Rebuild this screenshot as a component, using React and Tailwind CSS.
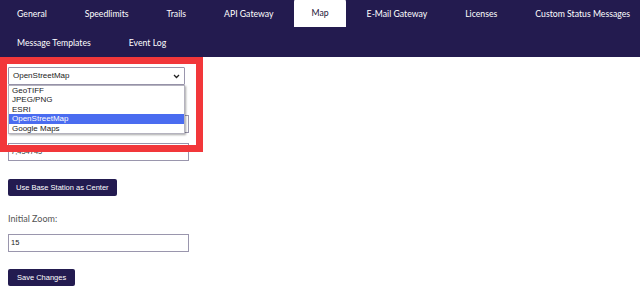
const TABS_ROW1 = [
  "General",
  "Speedlimits",
  "Trails",
  "API Gateway",
  "Map",
  "E-Mail Gateway",
  "Licenses",
  "Custom Status Messages",
];
const TABS_ROW2 = ["Message Templates", "Event Log"];

const MAP_TYPES = ["GeoTIFF", "JPEG/PNG", "ESRI", "OpenStreetMap", "Google Maps"];

function Tab({ label, active }) {
  return (
    <div
      className={`h-[28px] px-[17px] flex items-center whitespace-nowrap text-[8.7px] rounded-t-[3px] ${
        active ? "bg-white text-[#1b1535] -mt-px" : "text-white"
      }`}
    >
      {label}
    </div>
  );
}

export default function App() {
  return (
    <div className="w-[640px] h-[304px] bg-white overflow-hidden relative font-['Lato',sans-serif]">
      <nav className="bg-[#231b4f] h-[57px] flex flex-col">
        <div className="flex gap-[4px] h-[29px]">
          {TABS_ROW1.map((t) => (
            <Tab key={t} label={t} active={t === "Map"} />
          ))}
        </div>
        <div className="flex gap-[4px] h-[28px]">
          {TABS_ROW2.map((t) => (
            <Tab key={t} label={t} />
          ))}
        </div>
      </nav>

      <main className="px-[8px] pt-[10px] font-['Liberation_Sans',sans-serif] text-[7.5px] text-[#222]">
        <div className="w-[177px] h-[18px] border border-[#9a96ad] rounded-[1px] flex items-center justify-between px-[4px] bg-white text-[8px]">
          <span>OpenStreetMap</span>
          <svg width="7" height="5" viewBox="0 0 7 5">
            <path d="M1 1 L3.5 3.5 L6 1" stroke="#222" strokeWidth="1.3" fill="none" />
          </svg>
        </div>

        <div className="h-[30px]" />
        <div className="w-[181px] h-[18px] border border-[#9a96ad]" />
        <div className="h-[10px]" />
        <div className="w-[181px] h-[18px] border border-[#9a96ad] flex items-center px-[2px] text-[#444]">
          7,454745
        </div>

        <button className="mt-[18px] h-[17px] px-[8px] bg-[#231b50] text-white rounded-[2px] text-[7.5px]">
          Use Base Station as Center
        </button>

        <p className="mt-[17px] font-['Lato',sans-serif] text-[9px] text-[#555] leading-[12px]">
          Initial Zoom:
        </p>

        <div className="mt-[9px] w-[181px] h-[18px] border border-[#9a96ad] flex items-center px-[2px]">
          15
        </div>

        <button className="mt-[17px] h-[17px] px-[9px] bg-[#231b50] text-white rounded-[2px] text-[7.5px]">
          Save Changes
        </button>
      </main>

      {/* open dropdown list */}
      <ul className="absolute left-[8px] top-[85px] w-[177px] bg-white border border-[#b5b3bf] shadow-[1px_1px_2px_rgba(0,0,0,0.35)] font-['Liberation_Sans',sans-serif] text-[8px] text-[#222] leading-[9.4px]">
        {MAP_TYPES.map((m) => (
          <li
            key={m}
            className={`px-[3px] ${m === "OpenStreetMap" ? "bg-[#4a6cf0] text-white" : ""}`}
          >
            {m}
          </li>
        ))}
      </ul>

      {/* red annotation frame */}
      <div className="absolute left-0 top-[57px] w-[203px] h-[95px] border-[7px] border-[#f2373a]" />
    </div>
  );
}
